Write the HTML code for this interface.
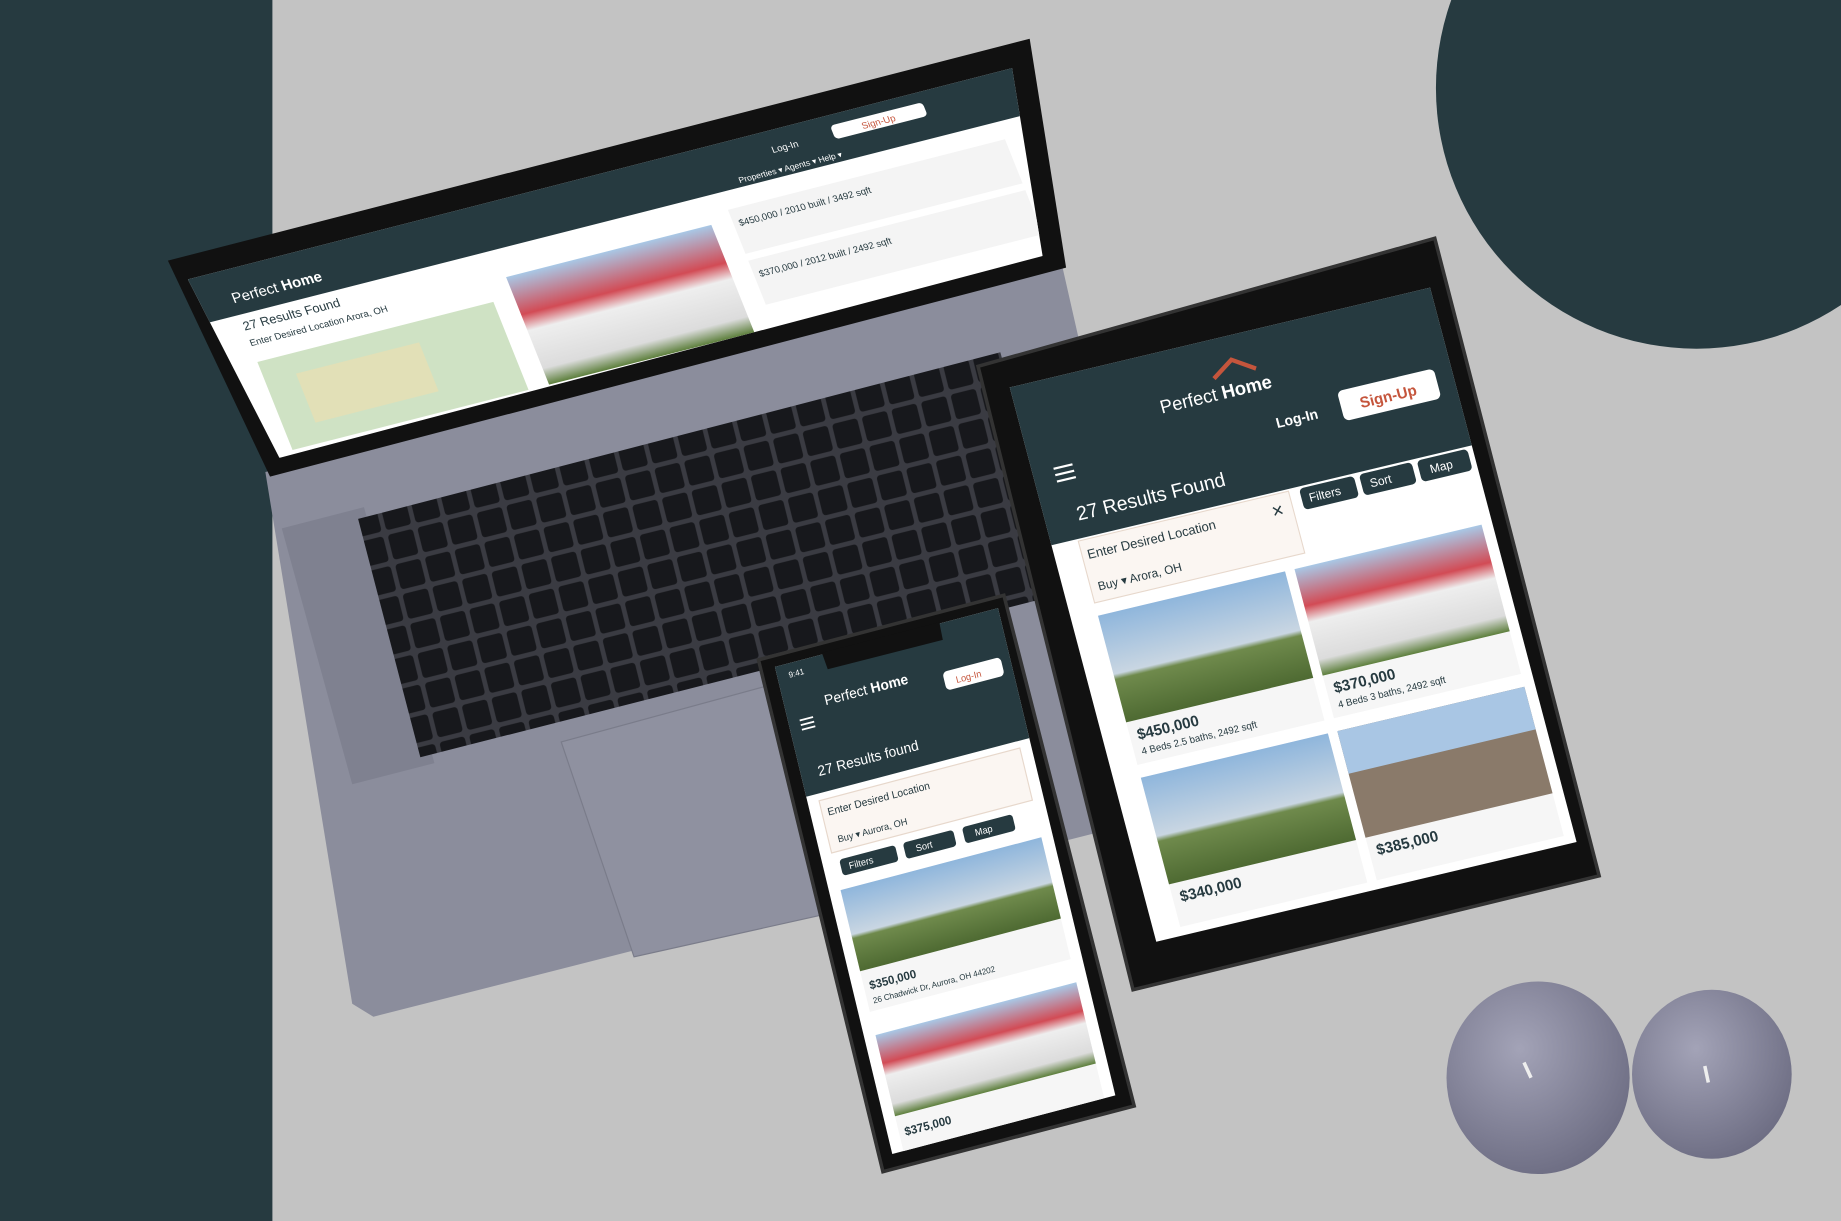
<!DOCTYPE html>
<html><head><meta charset="utf-8"><style>
html,body{margin:0;padding:0;width:1841px;height:1221px;overflow:hidden;background:#c3c3c3}
svg{display:block}
text{font-family:"Liberation Sans",sans-serif}
</style></head><body>
<svg width="1841" height="1221" viewBox="0 0 1568 1040" preserveAspectRatio="none">
<defs>
<linearGradient id="sky" x1="0" y1="0" x2="0" y2="1"><stop offset="0" stop-color="#8fb6dc"/><stop offset="0.55" stop-color="#c9d6e2"/><stop offset="0.6" stop-color="#6f8a4c"/><stop offset="1" stop-color="#4e6a32"/></linearGradient>
<linearGradient id="house2" x1="0" y1="0" x2="0" y2="1"><stop offset="0" stop-color="#a8c8e6"/><stop offset="0.35" stop-color="#d24b55"/><stop offset="0.5" stop-color="#eeeeee"/><stop offset="0.85" stop-color="#dcdcdc"/><stop offset="1" stop-color="#5d7f3c"/></linearGradient>
<radialGradient id="cand" cx="0.4" cy="0.35" r="0.7"><stop offset="0" stop-color="#a3a3b7"/><stop offset="1" stop-color="#6c6c82"/></radialGradient>
<pattern id="keys" width="26" height="26" patternUnits="userSpaceOnUse" patternTransform="rotate(-14)"><rect width="26" height="26" fill="#3a3b42"/><rect x="2" y="2" width="22" height="22" rx="3" fill="#17181c"/></pattern>
<clipPath id="lapclip"><polygon points="160,238 862,58 888,218 238,390"/></clipPath>
</defs>
<rect width="1568" height="1040" fill="#c3c3c3"/>
<rect width="232" height="1040" fill="#263a40"/>
<circle cx="1445" cy="75" r="222" fill="#263a40"/>

<polygon points="226,402 905,228 1010,690 318,866 300,855" fill="#8b8d9c"/>
<polygon points="240,450 310,432 370,650 300,668" fill="#7f8190"/>
<polygon points="305,442 852,300 908,505 358,645" fill="url(#keys)"/>
<polygon points="478,632 698,572 742,770 540,815" fill="#8f91a0" stroke="#7a7c8a"/>
<polygon points="143,222 877,33 908,228 230,406" fill="#111"/>
<g clip-path="url(#lapclip)">
<g transform="matrix(0.874,-0.2225,0.333,0.833,163,240)">
<rect x="-20" y="-20" width="840" height="220" fill="#fff"/>
<rect x="-20" y="-20" width="840" height="62" fill="#263a40"/>
<text x="30" y="30" fill="#fff" font-size="14" font-family="Liberation Serif">Perfect <tspan font-weight="bold">Home</tspan></text>
<text x="560" y="18" fill="#fff" font-size="9">Log-In</text>
<rect x="620" y="6" width="90" height="14" rx="4" fill="#fff"/><text x="648" y="17" fill="#c5553c" font-size="9">Sign-Up</text>
<text x="520" y="38" fill="#fff" font-size="8">Properties ▾   Agents ▾   Help ▾</text>
<text x="30" y="58" fill="#263a40" font-size="12">27 Results Found</text>
<text x="30" y="74" fill="#263a40" font-size="9">Enter Desired Location   Arora, OH</text>
<rect x="30" y="90" width="230" height="90" fill="#cfe2c4"/>
<rect x="60" y="110" width="120" height="50" fill="#e9dfb2" opacity="0.7"/>
<rect x="280" y="70" width="200" height="110" fill="url(#house2)"/>
<rect x="500" y="60" width="270" height="45" fill="#f4f4f4"/>
<text x="505" y="78" fill="#263a40" font-size="9">$450,000 / 2010 built / 3492 sqft</text>
<rect x="500" y="112" width="270" height="45" fill="#f4f4f4"/>
<text x="505" y="130" fill="#263a40" font-size="9">$370,000 / 2012 built / 2492 sqft</text>
</g>
</g>

<polygon points="833,312 1222,203 1362,746 965,843" fill="#111" stroke="#333" stroke-width="3"/>
<g transform="matrix(0.895,-0.2125,0.240,0.908,860,330)">
<rect width="400" height="520" fill="#fff"/>
<rect width="400" height="148" fill="#263a40"/>
<path d="M185 35 L205 22 L225 35" stroke="#c5553c" stroke-width="4" fill="none"/>
<text x="130" y="55" fill="#fff" font-size="17" font-family="Liberation Serif">Perfect <tspan font-weight="bold">Home</tspan></text>
<text x="230" y="92" fill="#fff" font-size="13" font-weight="bold">Log-In</text>
<rect x="292" y="72" width="92" height="28" rx="5" fill="#fff"/><text x="310" y="92" fill="#c5553c" font-size="14" font-weight="bold">Sign-Up</text>
<rect x="20" y="80" width="18" height="2" fill="#fff"/><rect x="20" y="86" width="18" height="2" fill="#fff"/><rect x="20" y="92" width="18" height="2" fill="#fff"/>
<text x="30" y="132" fill="#fff" font-size="18">27 Results Found</text>
<rect x="25" y="150" width="200" height="58" fill="#fbf6f2" stroke="#e7d8cc"/>
<text x="30" y="168" fill="#263a40" font-size="12">Enter Desired Location</text>
<text x="32" y="198" fill="#263a40" font-size="11">Buy ▾   Arora, OH</text>
<text x="205" y="170" fill="#263a40" font-size="14">✕</text>
<rect x="235" y="150" width="52" height="20" rx="4" fill="#263a40"/><text x="242" y="164" fill="#fff" font-size="11">Filters</text>
<rect x="292" y="150" width="50" height="20" rx="4" fill="#263a40"/><text x="300" y="164" fill="#fff" font-size="11">Sort</text>
<rect x="347" y="150" width="48" height="20" rx="4" fill="#263a40"/><text x="357" y="164" fill="#fff" font-size="11">Map</text>
<rect x="25" y="220" width="178" height="140" fill="#f6f6f6"/>
<rect x="25" y="220" width="178" height="100" fill="url(#sky)"/>
<text x="32" y="338" fill="#263a40" font-size="14" font-weight="bold">$450,000</text>
<text x="32" y="352" fill="#263a40" font-size="9">4 Beds 2.5 baths, 2492 sqft</text>
<rect x="212" y="220" width="178" height="140" fill="#f6f6f6"/>
<rect x="212" y="220" width="178" height="100" fill="url(#house2)"/>
<text x="219" y="338" fill="#263a40" font-size="14" font-weight="bold">$370,000</text>
<text x="219" y="352" fill="#263a40" font-size="9">4 Beds 3 baths, 2492 sqft</text>
<rect x="25" y="372" width="178" height="140" fill="#f6f6f6"/>
<rect x="25" y="372" width="178" height="100" fill="url(#sky)"/>
<text x="32" y="490" fill="#263a40" font-size="14" font-weight="bold">$340,000</text>
<rect x="212" y="372" width="178" height="140" fill="#f6f6f6"/>
<rect x="212" y="372" width="178" height="100" fill="#8a7a6a"/>
<rect x="212" y="372" width="178" height="40" fill="#a9c6e4"/>
<text x="219" y="490" fill="#263a40" font-size="14" font-weight="bold">$385,000</text>
</g>

<polygon points="646,562 855,507 966,942 752,998" fill="#111" stroke="#333" stroke-width="3"/>
<g transform="matrix(0.95,-0.25,0.238,0.988,660,568)">
<rect width="200" height="420" fill="#fff"/>
<rect width="200" height="112" fill="#263a40"/>
<text x="10" y="12" fill="#fff" font-size="7">9:41</text>
<text x="35" y="42" fill="#fff" font-size="12" font-family="Liberation Serif">Perfect <tspan font-weight="bold">Home</tspan></text>
<rect x="140" y="40" width="52" height="16" rx="4" fill="#fff"/><text x="150" y="52" fill="#c5553c" font-size="8">Log-In</text>
<rect x="10" y="48" width="12" height="1.5" fill="#fff"/><rect x="10" y="52" width="12" height="1.5" fill="#fff"/><rect x="10" y="56" width="12" height="1.5" fill="#fff"/>
<text x="15" y="98" fill="#fff" font-size="12">27 Results found</text>
<rect x="10" y="118" width="180" height="45" fill="#fbf6f2" stroke="#e7d8cc"/>
<text x="15" y="132" fill="#263a40" font-size="9">Enter Desired Location</text>
<text x="18" y="156" fill="#263a40" font-size="8">Buy ▾   Aurora, OH</text>
<rect x="15" y="170" width="50" height="14" rx="3" fill="#263a40"/><text x="22" y="180" fill="#fff" font-size="8">Filters</text>
<rect x="72" y="170" width="45" height="14" rx="3" fill="#263a40"/><text x="82" y="180" fill="#fff" font-size="8">Sort</text>
<rect x="125" y="170" width="45" height="14" rx="3" fill="#263a40"/><text x="135" y="180" fill="#fff" font-size="8">Map</text>
<rect x="10" y="195" width="180" height="105" fill="#f6f6f6"/>
<rect x="10" y="195" width="180" height="70" fill="url(#sky)"/>
<text x="15" y="282" fill="#263a40" font-size="10" font-weight="bold">$350,000</text>
<text x="15" y="294" fill="#263a40" font-size="7">26 Chadwick Dr, Aurora, OH 44202</text>
<rect x="10" y="320" width="180" height="100" fill="#f6f6f6"/>
<rect x="10" y="320" width="180" height="70" fill="url(#house2)"/>
<text x="15" y="408" fill="#263a40" font-size="10" font-weight="bold">$375,000</text>
</g>
<path d="M700 556 L800 530 L803 545 L705 570 Z" fill="#111"/>

<ellipse cx="1310" cy="918" rx="78" ry="82" fill="url(#cand)"/>
<ellipse cx="1458" cy="915" rx="68" ry="72" fill="url(#cand)"/>
<line x1="1298" y1="905" x2="1304" y2="918" stroke="#eee" stroke-width="3"/>
<line x1="1452" y1="908" x2="1455" y2="922" stroke="#eee" stroke-width="3"/>
</svg>
</body></html>
